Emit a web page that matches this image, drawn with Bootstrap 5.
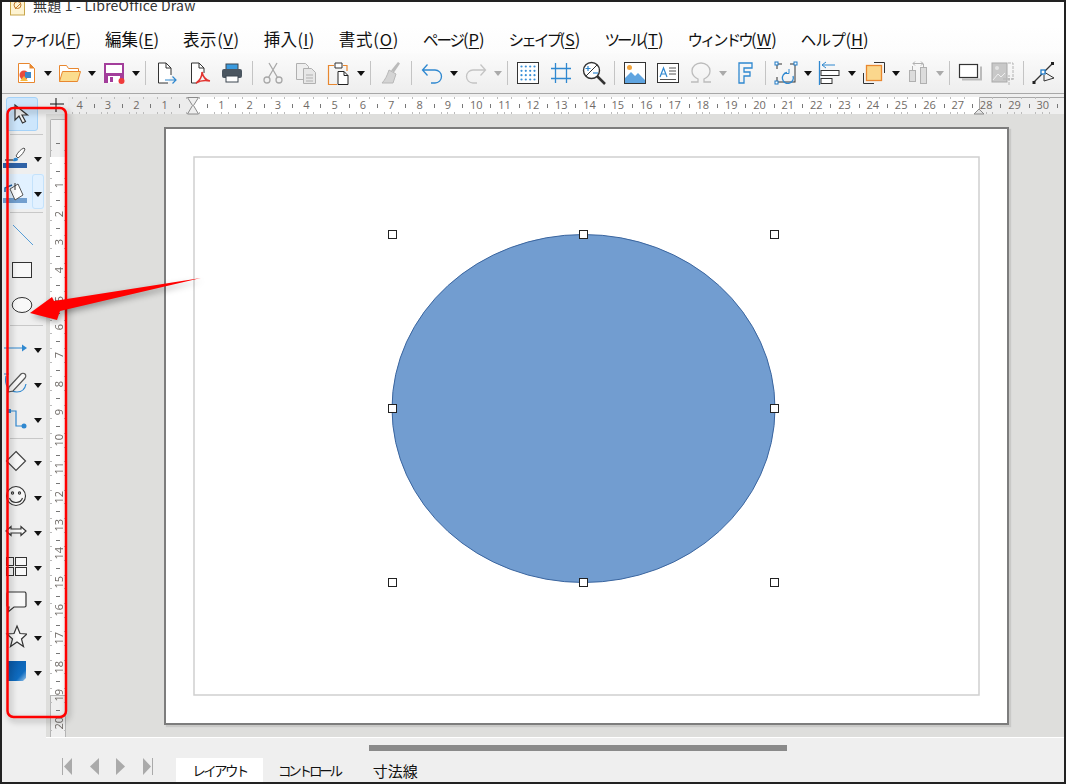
<!DOCTYPE html>
<html lang="ja">
<head>
<meta charset="utf-8">
<title>無題 1 - LibreOffice Draw</title>
<link href="https://cdn.jsdelivr.net/npm/bootstrap@5.3.0/dist/css/bootstrap.min.css" rel="stylesheet">
<style>
html,body{margin:0;background:#fff;overflow:hidden}
body{font-family:"Noto Sans CJK JP","Noto Sans",sans-serif;color:#111}
.shot{width:1067px;height:784px}
.frame{width:1066px;height:784px;border:2px solid #222;background:#fff;overflow:hidden}
.titlerow{height:24px;flex:none;overflow:hidden;padding-left:8px}
.titlerow svg{flex:none;margin-top:-2px}
.titletext{font-size:14px;line-height:20px;margin:-7px 0 0 8px;color:#333;letter-spacing:.2px}
.menurow{height:27px;flex:none;padding-left:8px;gap:24px;font-size:16.5px;line-height:27px;background:linear-gradient(#fff,#fcfcfc)}
.menurow u{text-underline-offset:2px}
.menurow i{font-style:normal;font-size:15.5px;letter-spacing:-2.8px}
.menurow i.kp{letter-spacing:-2.1px}
.menurow i.kh{letter-spacing:-.6px}
.mv{letter-spacing:.6px}.mi{letter-spacing:.4px}.mo{letter-spacing:.8px}
.toolrow{height:41px;flex:none;padding-left:7.5px;background:linear-gradient(#fbfbfb,#eeeeee);border-bottom:1px solid #a8a8a8}
.ti{width:33px;flex:none;display:flex;justify-content:center}
.tdd{width:11px;flex:none;display:flex;justify-content:center}
.tsp{width:8px;flex:none;display:flex;justify-content:center}
.tsp::before{content:"";width:1px;height:24px;background:#c4c4c4}
.tri{width:0;height:0;border-left:4px solid transparent;border-right:4px solid transparent;border-top:5px solid #111}
.tri.off{border-top-color:#aaa}
.mainrow{min-height:0}
.lefttools{width:44px;flex:none;background:#efefef;padding-top:3px}
.selbtn{margin-left:4px;width:32px;height:34px;background:#cde6fc;border:1px solid #a5d2f8;border-radius:3px;flex:none}
.lsep{height:1px;margin:3px 3px 4px 8px;background:#c8c8c8;flex:none}
.lrow{height:35px;flex:none;padding-left:1px}
.lrow svg{flex:none}
.lrow.mid{padding-left:8px}
.lrow .tri{margin-top:5px;margin-left:7px}
.lrow.hot{background:#e2f1ff;width:42px}
.hotdd{border:1px solid #c4e2fb;border-radius:3px;align-self:stretch;width:12px;margin-left:5px;display:flex;align-items:center;justify-content:center}
.hotdd .tri{margin-left:0}
.rightcol{min-width:0}
.rulerrow{height:20px;flex:none;background:#efefef}
.crosscell{width:22px;flex:none;padding-top:4px;padding-left:4px}
.hruler{margin-top:3px;height:17px;flex:1 1 auto;overflow:hidden;
 background:linear-gradient(#a8a8a8,#a8a8a8) 911px 0/100% 1px no-repeat,linear-gradient(#a8a8a8,#a8a8a8) 911px 0/1px 100% no-repeat,linear-gradient(to right,#ececec 125px,#fff 125px,#fff 911px,#efefef 911px)}
.hstrip{margin-left:-2.53px;height:17px}
.rc,.vc{flex:none;display:flex;align-items:center;justify-content:center;font-family:"Open Sans","Noto Sans",sans-serif;font-size:11px;color:#6f6a66}
.rc{width:28.34px;height:17px;background:
 linear-gradient(#777,#777) 0 50%/1px 4px no-repeat,
 linear-gradient(#bbb,#bbb) 25% 100%/1px 2px no-repeat,
 linear-gradient(#bbb,#bbb) 50% 100%/1px 2px no-repeat,
 linear-gradient(#bbb,#bbb) 75% 100%/1px 2px no-repeat,
 linear-gradient(#bbb,#bbb) 25% 0/1px 2px no-repeat,
 linear-gradient(#bbb,#bbb) 75% 0/1px 2px no-repeat}
.canvasarea{background:#dededc;min-height:0}
.vruler{width:16px;flex:none;margin:5px 0 0 4px;overflow:hidden;padding-top:24px;border-radius:2px 2px 0 0;
 background:
 linear-gradient(#b4b4b4,#b4b4b4) 0 0/1px 38px no-repeat,
 linear-gradient(#b4b4b4,#b4b4b4) 100% 0/1px 38px no-repeat,
 linear-gradient(#b4b4b4,#b4b4b4) 0 0/100% 1px no-repeat,
 linear-gradient(#b4b4b4,#b4b4b4) 0 576px/1px 100% no-repeat,
 linear-gradient(#b4b4b4,#b4b4b4) 100% 576px/1px 100% no-repeat,
 linear-gradient(#b4b4b4,#b4b4b4) 0 576px/100% 1px no-repeat,
 linear-gradient(to bottom,#efefef 38px,#fff 38px,#fff 576px,#efefef 576px)}
.vc{width:16px;height:28.34px;background:
 linear-gradient(#777,#777) 50% 0/4px 1px no-repeat,
 linear-gradient(#bbb,#bbb) 100% 25%/2px 1px no-repeat,
 linear-gradient(#bbb,#bbb) 100% 75%/2px 1px no-repeat,
 linear-gradient(#bbb,#bbb) 0 25%/2px 1px no-repeat,
 linear-gradient(#bbb,#bbb) 0 75%/2px 1px no-repeat}
.vc span{writing-mode:vertical-rl;transform:rotate(180deg);line-height:1}
.workspace{min-width:0;padding:13px 0 0 98px}
.pagesheet{width:845px;height:598px;background:#fff;border:2px solid #7d7d7d;box-shadow:2px 2px 1px #c9c9c7;flex:none}
.pagesheet svg{display:block}
.bottombar{height:45px;flex:none;background:#efefef}
.bottomline{height:1px;margin-left:44px;background:#fff}
.scrollrow{height:20px;padding:7px 0 0 367px}
.thumb{width:418px;height:6px;background:#8a8a8a}
.tabrow{height:24px;padding-left:60px}
.navs{width:114px;flex:none;gap:17px}
.tabon{background:#fff;width:87px;text-align:center;height:24px;line-height:25px;font-size:13.5px;letter-spacing:-2.6px}
.taboff{font-size:13.5px;line-height:25px;letter-spacing:-3.2px}
.taboff.kj{font-size:15px;letter-spacing:0}
.ms15{margin-left:15px}.ms33{margin-left:33px}
.callouts{pointer-events:none}
.callouts .blur{filter:drop-shadow(2px 3px 3px rgba(0,0,0,.35))}
.dn2{margin-top:3px}
</style>
</head>
<body>
<div class="shot position-relative">
<div class="frame d-flex flex-column">

  <div class="titlerow d-flex align-items-start">
    <svg width="15" height="16" viewBox="0 0 15 16"><rect x=".5" y="-2" width="14" height="17" fill="#fdf3d2" stroke="#c9a64a"/><circle cx="7.5" cy="5" r="3.500" fill="none" stroke="#c47a2a"/><path d="M5 9l5-5" stroke="#c47a2a"/></svg>
    <div class="titletext">無題 1 - LibreOffice Draw</div>
  </div>

  <nav class="menurow d-flex">
    <span><i>ファイル</i>(<u>F</u>)</span><span>編集(<u>E</u>)</span><span class="mv">表示(<u>V</u>)</span><span class="mi">挿入(<u>I</u>)</span><span class="mo">書式(<u>O</u>)</span><span><i class="kp">ページ</i>(<u>P</u>)</span><span><i>シェイプ</i>(<u>S</u>)</span><span><i>ツール</i>(<u>T</u>)</span><span><i>ウィンドウ</i>(<u>W</u>)</span><span><i class="kh">ヘルプ</i>(<u>H</u>)</span>
  </nav>

  <div class="toolrow d-flex align-items-center">
    <div class="ti"><svg width="24" height="24" viewBox="0 0 24 24"><path d="M4.500 2.500h11l5 5v14h-16z" fill="#fff" stroke="#e8872f"/><path d="M15.500 2.500v5h5z" fill="#e8872f"/><circle cx="10" cy="14" r="4.500" fill="#e74c3c"/><rect x="11" y="11" width="6" height="6" fill="#3a86c8"/><path d="M6 20l4-5 4 5z" fill="#f4b942"/></svg></div>
    <div class="tdd"><div class="tri"></div></div>
    <div class="ti"><svg width="24" height="24" viewBox="0 0 24 24"><path d="M1.500 20.500v-16h7l2 3h10v3" fill="#fff" stroke="#e8872f"/><path d="M1.500 20.500l3-10h18l-3 10z" fill="#fbdc8e" stroke="#e8872f"/></svg></div>
    <div class="tdd"><div class="tri"></div></div>
    <div class="ti"><svg width="24" height="24" viewBox="0 0 24 24"><path d="M2 2h20v20H2z" fill="#a33e9b"/><rect x="4" y="4" width="16" height="8" fill="#fff"/><rect x="6" y="15" width="12" height="7" fill="#fff"/><rect x="8" y="16" width="3" height="5" fill="#a33e9b"/><circle cx="19.500" cy="20" r="3" fill="#ef3b3b"/></svg></div>
    <div class="tdd"><div class="tri"></div></div>
    <div class="tsp"></div>
    <div class="ti"><svg width="24" height="24" viewBox="0 0 24 24"><path d="M17 14V7l-5-5H4.500v20H14" fill="#fff" stroke="#333"/><path d="M12 2v5h5" fill="none" stroke="#333"/><path d="M11 19h11M18.500 15.500L22 19l-3.500 3.500" fill="none" stroke="#2f88d0" stroke-width="1.200"/></svg></div>
    <div class="ti"><svg width="24" height="24" viewBox="0 0 24 24"><path d="M17 12V7l-5-5H4.500v20H10" fill="#fff" stroke="#333"/><path d="M12 2v5h5" fill="none" stroke="#333"/><path d="M15 11c0 6-3 9-6 11 5-3 9-3 14-2-5-1-7-4-8-9z" fill="none" stroke="#e2332f" stroke-width="1.500"/></svg></div>
    <div class="ti"><svg width="24" height="24" viewBox="0 0 24 24"><rect x="6" y="3" width="12" height="6" fill="#3a9ade" stroke="#3c4650"/><rect x="2" y="8" width="20" height="9" rx="2" fill="#4b5660"/><rect x="6" y="15" width="12" height="6" fill="#fff" stroke="#3c4650"/></svg></div>
    <div class="tsp"></div>
    <div class="ti"><svg width="24" height="24" viewBox="0 0 24 24" fill="none" stroke="#a8a8a8" stroke-width="1.300"><circle cx="6" cy="19" r="3"/><circle cx="18" cy="19" r="3"/><path d="M7.500 16.500L16 2M16.500 16.500L8 2"/></svg></div>
    <div class="ti"><svg width="24" height="24" viewBox="0 0 24 24" fill="#eee" stroke="#b0b0b0"><path d="M2.500 2.500h9l3 3v13h-12z"/><path d="M9.500 7.500h8l4 4v11h-12z" fill="#e6e6e6"/><path d="M12 14h7M12 17h7M12 20h7"/></svg></div>
    <div class="ti"><svg width="24" height="24" viewBox="0 0 24 24" fill="none"><path d="M7 4.500H1.500v19H10M16 4.500h4V10" stroke="#e8872f" stroke-width="1.200"/><path d="M8 2h7v5H8z" fill="#fff" stroke="#333"/><path d="M11 10.500h6l4 4v9H11z" fill="#fff" stroke="#222"/><path d="M17 10.500v4h4" stroke="#222"/></svg></div>
    <div class="tdd"><div class="tri"></div></div>
    <div class="tsp"></div>
    <div class="ti"><svg width="24" height="24" viewBox="0 0 24 24"><path d="M19 1l2 1.500-6 9-3-2z" fill="#bbb"/><path d="M10 9l7 4-3 9H3c3-3 5-7 7-13z" fill="#d4d4d4" stroke="#b8b8b8"/></svg></div>
    <div class="tsp"></div>
    <div class="ti"><svg width="24" height="24" viewBox="0 0 24 24" fill="none" stroke="#2f88d0" stroke-width="1.300"><path d="M3 9h12a6.500 6.500 0 0 1 0 13h-4M7.500 3.500L2.500 9l5 5.500"/></svg></div>
    <div class="tdd"><div class="tri"></div></div>
    <div class="ti"><svg width="24" height="24" viewBox="0 0 24 24" fill="none" stroke="#c4c4c4" stroke-width="1.300"><path d="M21 9H9a6.500 6.500 0 0 0 0 13h4M16.500 3.500l5 5.500-5 5.500"/></svg></div>
    <div class="tdd"><div class="tri off"></div></div>
    <div class="tsp"></div>
    <div class="ti"><svg width="24" height="24" viewBox="0 0 24 24"><rect x="1.500" y="1.500" width="21" height="21" fill="#fff" stroke="#333"/><g fill="#3a8fd6"><circle cx="5.500" cy="5.500" r="1.100"/><circle cx="9.800" cy="5.500" r="1.100"/><circle cx="14.200" cy="5.500" r="1.100"/><circle cx="18.500" cy="5.500" r="1.100"/><circle cx="5.500" cy="9.800" r="1.100"/><circle cx="9.800" cy="9.800" r="1.100"/><circle cx="14.200" cy="9.800" r="1.100"/><circle cx="18.500" cy="9.800" r="1.100"/><circle cx="5.500" cy="14.200" r="1.100"/><circle cx="9.800" cy="14.200" r="1.100"/><circle cx="14.200" cy="14.200" r="1.100"/><circle cx="18.500" cy="14.200" r="1.100"/><circle cx="5.500" cy="18.500" r="1.100"/><circle cx="9.800" cy="18.500" r="1.100"/><circle cx="14.200" cy="18.500" r="1.100"/><circle cx="18.500" cy="18.500" r="1.100"/></g></svg></div>
    <div class="ti"><svg width="24" height="24" viewBox="0 0 24 24" stroke="#2f88d0" stroke-width="1.300" fill="none"><path d="M6.500 2v20M17.500 2v20M2 7.500h20M2 17.500h20"/></svg></div>
    <div class="ti"><svg width="24" height="24" viewBox="0 0 24 24" fill="none"><circle cx="9.500" cy="9.500" r="8" fill="#fff" stroke="#333" stroke-width="1.400"/><path d="M15 15l8 8" stroke="#333" stroke-width="2.500"/><path d="M4 15L15 4" stroke="#333"/><path d="M3.500 7.500h5M6 5v5" stroke="#2f88d0" stroke-width="1.200"/><path d="M11 12h5" stroke="#2f88d0" stroke-width="1.200"/></svg></div>
    <div class="tsp"></div>
    <div class="ti"><svg width="24" height="24" viewBox="0 0 24 24"><rect x="1.500" y="1.500" width="21" height="21" fill="#fff" stroke="#333"/><circle cx="6.500" cy="6.500" r="2.500" fill="#f0a33c"/><path d="M2 22v-5l6-6 4 4 3-3 7 7v3z" fill="#5fa4e0"/></svg></div>
    <div class="ti"><svg width="24" height="24" viewBox="0 0 24 24"><rect x="1.500" y="2.500" width="21" height="19" fill="#fff" stroke="#333"/><path d="M4 16L7.500 7l3.500 9M5.200 13h4.600" fill="none" stroke="#2f88d0" stroke-width="1.200"/><path d="M13 7h7M13 10h7M13 13h7M4 18.500h16" stroke="#555"/></svg></div>
    <div class="ti"><svg width="24" height="24" viewBox="0 0 24 24" fill="none" stroke="#bcbcbc" stroke-width="1.300"><path d="M2 21h7v-3c-4-2-6-4-6-8a9 8 0 0 1 18 0c0 4-2 6-6 8v3h7"/></svg></div>
    <div class="tdd"><div class="tri off"></div></div>
    <div class="ti"><svg width="24" height="24" viewBox="0 0 24 24" fill="none" stroke="#2f88d0" stroke-width="1.300"><path d="M6 2h13v5h-8v4h6v4h-6v7H6z"/></svg></div>
    <div class="tsp"></div>
    <div class="ti"><svg width="24" height="24" viewBox="0 0 24 24" fill="none"><rect x="3" y="3" width="18" height="18" stroke="#333"/><path d="M8 3h8M3 8v8" stroke="#f7f7f7" stroke-width="2"/><path d="M19 15a5.500 5.500 0 1 1-6-3.500" stroke="#2f88d0" stroke-width="1.300"/><path d="M15 8v4.500h-4.500" stroke="#2f88d0" stroke-width="1"/><g fill="#fff" stroke="#1f7ac6"><rect x="1" y="1" width="3" height="3"/><rect x="20" y="1" width="3" height="3"/><rect x="1" y="20" width="3" height="3"/></g></svg></div>
    <div class="tdd"><div class="tri"></div></div>
    <div class="ti"><svg width="24" height="24" viewBox="0 0 24 24" fill="none"><path d="M1.500 0v24" stroke="#2f88d0" stroke-width="1.300"/><path d="M4 4h13M8 1L4 4l4 3" stroke="#2f88d0"/><rect x="3" y="9.500" width="18" height="5" fill="#fff" stroke="#333"/><rect x="3" y="17.500" width="11" height="5" fill="#fff" stroke="#333"/></svg></div>
    <div class="tdd"><div class="tri"></div></div>
    <div class="ti"><svg width="24" height="24" viewBox="0 0 24 24" fill="none"><path d="M12 1.500h10.500V12M1.500 12v10.500H12" stroke="#333"/><rect x="4.500" y="4.500" width="15" height="15" fill="#fbd78d" stroke="#e8872f" stroke-width="1.300"/></svg></div>
    <div class="tdd"><div class="tri"></div></div>
    <div class="ti"><svg width="24" height="24" viewBox="0 0 24 24" fill="#dcdcdc" stroke="#b0b0b0"><rect x="3.500" y="9.500" width="6" height="11"/><rect x="14.500" y="6.500" width="6" height="16"/><path d="M7 2.500h10M9 .5L7 2.500l2 2M15 .5l2 2-2 2" fill="none"/><path d="M6.500 5v4M17.500 3v3" fill="none"/></svg></div>
    <div class="tdd"><div class="tri off"></div></div>
    <div class="tsp"></div>
    <div class="ti"><svg width="24" height="24" viewBox="0 0 24 24" fill="none"><path d="M4 18.500h19v-13" stroke="#bbb" stroke-width="2"/><rect x="1.500" y="3.500" width="18" height="13" fill="#fff" stroke="#333" stroke-width="1.200"/></svg></div>
    <div class="ti"><svg width="24" height="24" viewBox="0 0 24 24" fill="none"><rect x="1" y="2" width="15" height="19" fill="#c8c8c8" stroke="#aaa"/><circle cx="6" cy="7" r="2" fill="#e4e4e4"/><path d="M2 19l5-6 3 3 4-4" stroke="#eee"/><path d="M17 2h5v16h-5M12 18h12M18 24V14" stroke="#b4b4b4" stroke-dasharray="3 1"/></svg></div>
    <div class="tsp"></div>
    <div class="ti"><svg width="24" height="24" viewBox="0 0 24 24" fill="none"><path d="M2 21L20 3" stroke="#333" stroke-width="1.200"/><path d="M12 14v6l10-3-10-6" stroke="#333"/><rect x="9" y="9" width="4" height="4" fill="#fff" stroke="#1f7ac6" stroke-width="1.300"/><rect x=".5" y="20" width="3" height="3" fill="#222"/><rect x="19" y="1" width="3" height="3" fill="#222"/></svg></div>
  </div>

  <div class="mainrow d-flex flex-grow-1">
    <div class="lefttools d-flex flex-column">
      <div class="selbtn d-flex align-items-center justify-content-center"><svg width="24" height="24" viewBox="0 0 24 24"><path d="M5 3v15l4-4 3.500 7 3-1.500-3.500-6.500h5.500z" fill="#f4f4f4" stroke="#333" stroke-width="1.200"/></svg></div>
      <div class="lsep"></div>
      <div class="lrow d-flex align-items-center"><svg class="dn2" width="24" height="24" viewBox="0 0 24 24" fill="none"><rect x="0" y="17" width="24" height="5" fill="#2f62a6"/><path d="M2 14h8" stroke="#333" stroke-width="1.200"/><path d="M13 10c2-4 5-7 8-8l1 1c-1 3-3 6-7 9z" fill="#fff" stroke="#555"/><path d="M10 15c0-3 2-4 4-3s1 4-4 3z" fill="#2f88d0"/></svg><div class="tri"></div></div>
      <div class="lrow hot d-flex align-items-center"><svg class="dn2" width="24" height="24" viewBox="0 0 24 24" fill="none"><rect x="0" y="17" width="24" height="5" fill="#729fcf"/><path d="M7 8l8-5 5 11-8 5z" fill="#fff" stroke="#555"/><path d="M2 11V7l7-3" stroke="#1f62a6" stroke-width="1.500"/><path d="M12 9V2" stroke="#333"/></svg><div class="hotdd"><div class="tri"></div></div></div>
      <div class="lsep"></div>
      <div class="lrow mid d-flex align-items-center"><svg width="24" height="24" viewBox="0 0 24 24"><path d="M3 2l20 20" stroke="#2f88d0" stroke-width=".8"/></svg></div>
      <div class="lrow mid d-flex align-items-center"><svg width="24" height="24" viewBox="0 0 24 24"><rect x="2.500" y="4.500" width="19" height="15" fill="#f8f8f8" stroke="#333"/></svg></div>
      <div class="lrow mid d-flex align-items-center"><svg width="24" height="24" viewBox="0 0 24 24"><ellipse cx="12" cy="12" rx="9.800" ry="7.500" fill="#f8f8f8" stroke="#333"/></svg></div>
      <div class="lsep"></div>
      <div class="lrow d-flex align-items-center"><svg width="24" height="24" viewBox="0 0 24 24"><path d="M1 12h18" stroke="#2f88d0" stroke-width="1"/><path d="M19 8.500l5 3.500-5 3.500z" fill="#2f88d0"/></svg><div class="tri"></div></div>
      <div class="lrow d-flex align-items-center"><svg width="24" height="24" viewBox="0 0 24 24" fill="none"><path d="M6 3H1M3 5c-2 9 3 16 11 16 5 0 8-3 9-8" stroke="#2f88d0" stroke-width="1.200"/><path d="M6 16L18 3c1-1 3-1 4 0s1 3 0 4L10 20l-5 1z" fill="#f8f8f8" stroke="#555" stroke-width="1.200"/></svg><div class="tri"></div></div>
      <div class="lrow d-flex align-items-center"><svg class="dn2" width="24" height="24" viewBox="0 0 24 24" fill="none"><path d="M6 4h7v15h9" stroke="#2f88d0" stroke-width="1.200"/><rect x="4" y="2" width="4" height="4" fill="#2f88d0"/><circle cx="21" cy="19" r="2.500" fill="#2f88d0"/></svg><div class="tri"></div></div>
      <div class="lsep"></div>
      <div class="lrow d-flex align-items-center"><svg width="24" height="24" viewBox="0 0 24 24"><path d="M13 2.500l9.500 9.500-9.500 9.500L3.500 12z" fill="#f8f8f8" stroke="#444" stroke-width="1.200"/></svg><div class="tri"></div></div>
      <div class="lrow d-flex align-items-center"><svg width="24" height="24" viewBox="0 0 24 24" fill="none" stroke="#333" stroke-width="1.100"><circle cx="13" cy="12" r="9.500" fill="#f8f8f8"/><circle cx="9.500" cy="9" r="1.100"/><circle cx="16.500" cy="9" r="1.100"/><path d="M6.500 14c2 6 11 6 13 0"/></svg><div class="tri"></div></div>
      <div class="lrow d-flex align-items-center"><svg width="24" height="24" viewBox="0 0 24 24"><path d="M3 12l5-4.500v2.500h10v-2.500l5 4.500-5 4.500V14H8v2.500z" fill="#f8f8f8" stroke="#333" stroke-width="1.200"/></svg><div class="tri"></div></div>
      <div class="lrow d-flex align-items-center"><svg width="24" height="24" viewBox="0 0 24 24" fill="#f8f8f8" stroke="#333"><rect x="3.500" y="3.500" width="7" height="8"/><rect x="12.500" y="3.500" width="11" height="8"/><rect x="3.500" y="13.500" width="7" height="8"/><rect x="12.500" y="13.500" width="11" height="8"/></svg><div class="tri"></div></div>
      <div class="lrow d-flex align-items-center"><svg width="24" height="24" viewBox="0 0 24 24"><path d="M5 3h17a2 2 0 0 1 1 2v12a2 2 0 0 1-2 1H11l-6 5 1-5H5a2 2 0 0 1-1-2V5a2 2 0 0 1 1-2z" fill="#f8f8f8" stroke="#333" stroke-width="1.200"/></svg><div class="tri"></div></div>
      <div class="lrow d-flex align-items-center"><svg width="24" height="24" viewBox="0 0 24 24"><path d="M14 2l3 7.500 7 .5-5.500 5 2 7.500L14 18l-6.500 4.500 2-7.500L4 10l7-.500z" fill="#f8f8f8" stroke="#333" stroke-width="1.200"/></svg><div class="tri"></div></div>
      <div class="lrow d-flex align-items-center"><svg width="24" height="24" viewBox="0 0 24 24"><defs><linearGradient id="cube" x1="0" y1="0" x2="1" y2="1"><stop offset="0" stop-color="#0a58a6"/><stop offset=".7" stop-color="#0f6cc0"/><stop offset="1" stop-color="#9cc6ea"/></linearGradient></defs><path d="M5 2h18v17l-3 3H5z" fill="url(#cube)"/></svg><div class="tri"></div></div>
    </div>

    <div class="rightcol d-flex flex-column flex-grow-1">
      <div class="rulerrow d-flex">
        <div class="crosscell"><svg class="d-block" width="14" height="16" viewBox="0 0 14 16"><path d="M0 6h14M6 0v14" stroke="#111"/></svg></div>
        <div class="hruler">
          <div class="hstrip d-flex">
            <div class="rc">4</div><div class="rc">3</div><div class="rc">2</div><div class="rc">1</div><div class="rc"></div>
            <div class="rc">1</div><div class="rc">2</div><div class="rc">3</div><div class="rc">4</div><div class="rc">5</div><div class="rc">6</div><div class="rc">7</div><div class="rc">8</div><div class="rc">9</div><div class="rc">10</div><div class="rc">11</div><div class="rc">12</div><div class="rc">13</div><div class="rc">14</div><div class="rc">15</div><div class="rc">16</div><div class="rc">17</div><div class="rc">18</div><div class="rc">19</div><div class="rc">20</div><div class="rc">21</div><div class="rc">22</div><div class="rc">23</div><div class="rc">24</div><div class="rc">25</div><div class="rc">26</div><div class="rc">27</div><div class="rc">28</div><div class="rc">29</div><div class="rc">30</div><div class="rc"></div>
          </div>
        </div>
      </div>
      <div class="canvasarea d-flex flex-grow-1">
        <div class="vruler d-flex flex-column">
          <div class="vc"></div><div class="vc"><span>1</span></div><div class="vc"><span>2</span></div><div class="vc"><span>3</span></div><div class="vc"><span>4</span></div><div class="vc"><span>5</span></div><div class="vc"><span>6</span></div><div class="vc"><span>7</span></div><div class="vc"><span>8</span></div><div class="vc"><span>9</span></div><div class="vc"><span>10</span></div><div class="vc"><span>11</span></div><div class="vc"><span>12</span></div><div class="vc"><span>13</span></div><div class="vc"><span>14</span></div><div class="vc"><span>15</span></div><div class="vc"><span>16</span></div><div class="vc"><span>17</span></div><div class="vc"><span>18</span></div><div class="vc"><span>19</span></div><div class="vc"><span>20</span></div>
        </div>
        <div class="workspace flex-grow-1">
          <div class="pagesheet">
            <svg width="841" height="594" viewBox="166 129 841 594">
              <rect x="194" y="157" width="785" height="538" fill="none" stroke="#cfcfcf" stroke-width="1.500"/>
              <ellipse cx="583.500" cy="408.500" rx="191.500" ry="174" fill="#729dd0" stroke="#3a659f"/>
              <g fill="#fff" stroke="#222">
                <rect x="388.500" y="230.500" width="8" height="8"/><rect x="579.500" y="230.500" width="8" height="8"/><rect x="770.500" y="230.500" width="8" height="8"/>
                <rect x="388.500" y="404.500" width="8" height="8"/><rect x="770.500" y="404.500" width="8" height="8"/>
                <rect x="388.500" y="578.500" width="8" height="8"/><rect x="579.500" y="578.500" width="8" height="8"/><rect x="770.500" y="578.500" width="8" height="8"/>
              </g>
            </svg>
          </div>
        </div>
      </div>
    </div>
  </div>

  <div class="bottombar d-flex flex-column">
    <div class="bottomline"></div>
    <div class="scrollrow"><div class="thumb"></div></div>
    <div class="tabrow d-flex">
      <div class="navs d-flex align-items-start">
        <svg width="10" height="17" viewBox="0 0 10 17"><path d="M.5 0v17" stroke="#aaa"/><path d="M10 0v17L2 8.500z" fill="#aaa"/></svg>
        <svg width="10" height="17" viewBox="0 0 10 17"><path d="M10 0v17L1 8.500z" fill="#aaa"/></svg>
        <svg width="10" height="17" viewBox="0 0 10 17"><path d="M0 0v17l9-8.500z" fill="#aaa"/></svg>
        <svg width="10" height="17" viewBox="0 0 10 17"><path d="M0 0v17l8-8.500z" fill="#aaa"/><path d="M9.500 0v17" stroke="#aaa"/></svg>
      </div>
      <div class="tabon">レイアウト</div>
      <div class="taboff ms15">コントロール</div>
      <div class="taboff kj ms33">寸法線</div>
    </div>
  </div>
</div>

<svg class="callouts position-absolute top-0 start-0" width="1067" height="784" viewBox="0 0 1067 784">
  <path d="M187.500 97.500h11l-5 8 5 8.500h-11l5-8.500z" fill="#efefef" stroke="#8a8a8a"/>
  <path d="M974 114l5-5 5 5z" fill="#e4e4e4" stroke="#8a8a8a"/>
  <rect class="blur" x="7.500" y="108" width="58.500" height="609" rx="6" fill="none" stroke="#ff0000" stroke-width="2.500"/>
  <path class="blur" d="M30 313L52 297L54 301L201 278L60 311L57 320z" fill="#ff0000"/>
</svg>
</div>
<script src="https://cdn.jsdelivr.net/npm/bootstrap@5.3.0/dist/js/bootstrap.bundle.min.js"></script>
</body>
</html>
